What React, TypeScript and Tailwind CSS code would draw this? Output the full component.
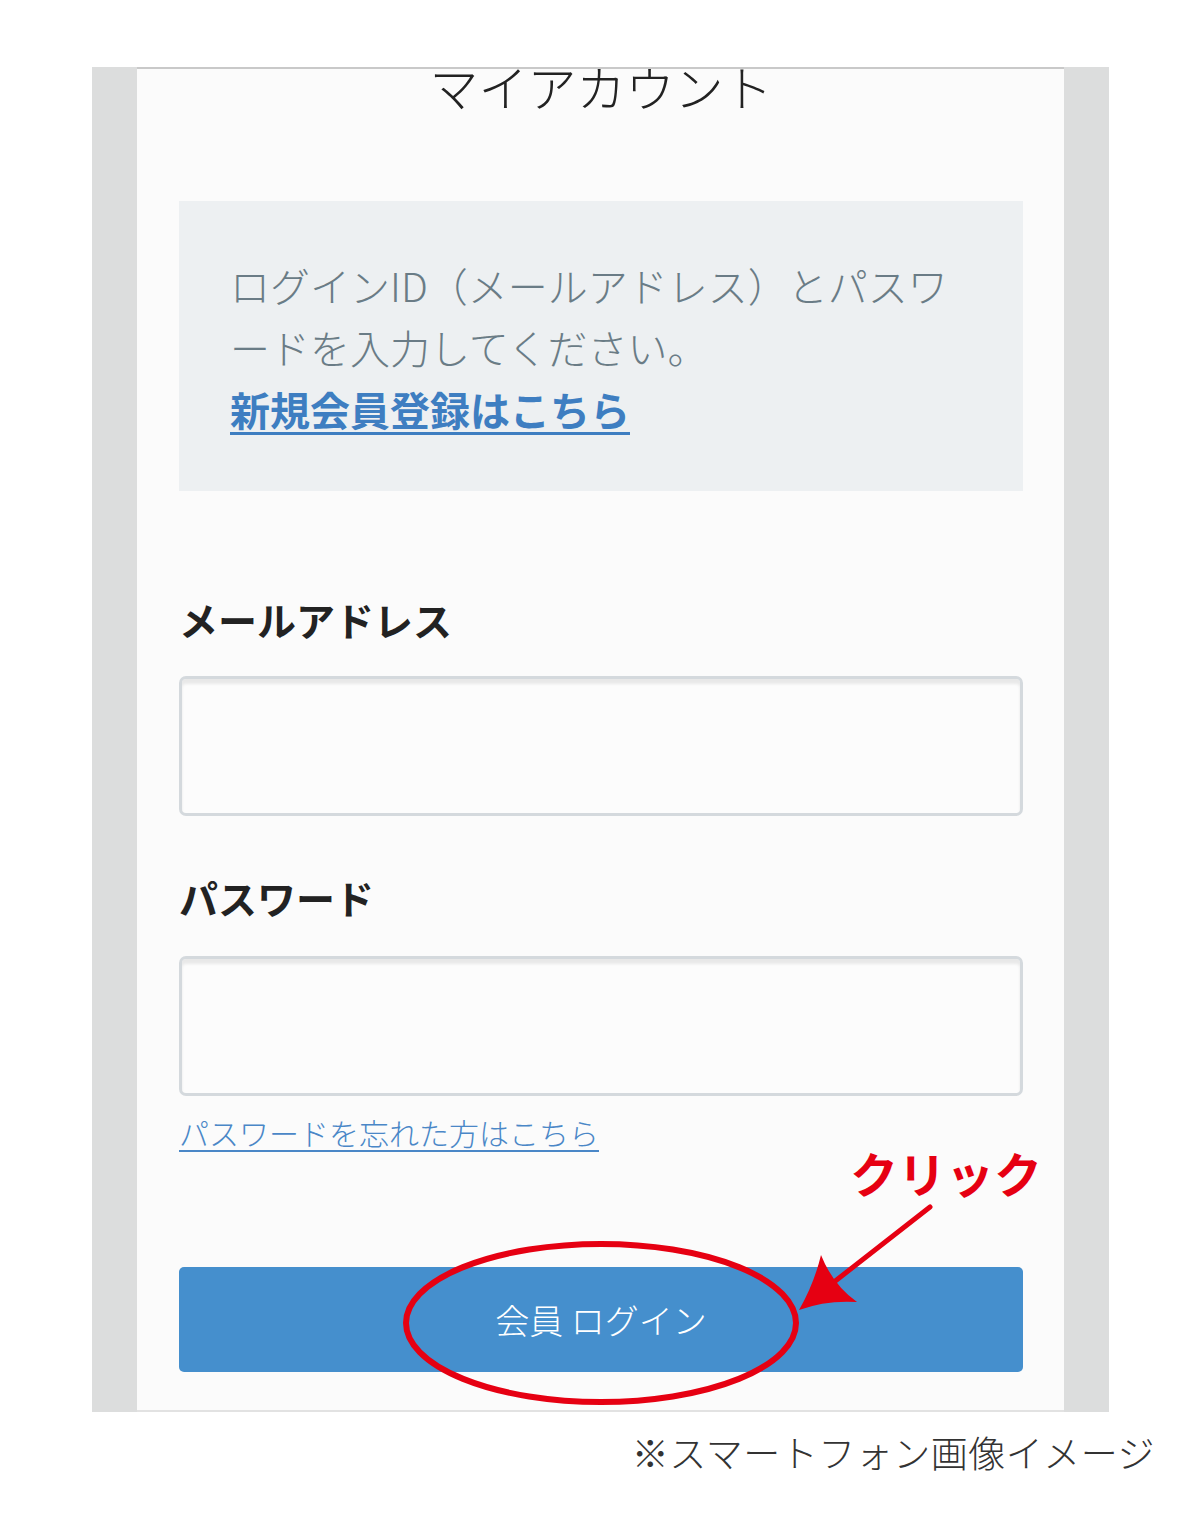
import React from "react";

const jp = { fontFamily: '"Noto Sans CJK JP", "Noto Sans", sans-serif' };

export default function App() {
  return (
    <div className="relative w-[1200px] h-[1514px] bg-white overflow-hidden" style={jp}>
      {/* スマホ枠 */}
      <div className="ml-[92px] mt-[67px] w-[1017px] h-[1345px] bg-[#dcdddd]">
        <div className="ml-[45px] w-[927px] h-full bg-[#fbfbfb] border-t-2 border-b-2 border-t-[#c9c9c9] border-b-[#e2e2e2] pr-[41px] pl-[42px]">
          {/* タイトル（スクショでは上が切れている） */}
          <div className="h-[132px] overflow-hidden">
            <h1 className="-mt-[8px] text-center text-[49px] leading-none font-light text-[#222]">
              マイアカウント
            </h1>
          </div>

          {/* 案内 */}
          <div className="h-[290px] bg-[#edf0f2] px-[51px] pt-[53px]">
            <p className="text-[40px] leading-[62px] text-[#6a7c86] font-light">
              ログインID（メールアドレス）とパスワ
              <br />
              ードを入力してください。
            </p>
            <a className="block text-[40px] leading-[62px] font-bold text-[#3e7ec1] underline underline-offset-[6px] decoration-[3px] w-fit">
              新規会員登録はこちら
            </a>
          </div>

          {/* フォーム */}
          <div className="pt-[100px]">
            <label className="block text-[39px] leading-[57px] font-bold text-[#222]">
              メールアドレス
            </label>
            <div className="mt-[28px] h-[140px] rounded-[7px] border-[3px] border-[#d4d9dd] bg-[#fcfcfc] shadow-[inset_0_5px_3px_rgba(0,0,0,0.08)]" />

            <label className="block mt-[53px] text-[39px] leading-[57px] font-bold text-[#222]">
              パスワード
            </label>
            <div className="mt-[30px] h-[140px] rounded-[7px] border-[3px] border-[#d4d9dd] bg-[#fcfcfc] shadow-[inset_0_5px_3px_rgba(0,0,0,0.08)]" />

            <a className="block mt-[14px] w-fit text-[30px] leading-[45px] font-light text-[#4a87c7] underline underline-offset-[5px] decoration-2">
              パスワードを忘れた方はこちら
            </a>

            <button className="mt-[112px] w-full h-[105px] rounded-[5px] bg-[#458fcd] text-white text-[34px] font-light flex items-center justify-center">
              会員&nbsp;ログイン
            </button>
          </div>
        </div>
      </div>

      {/* 注記 */}
      <div className="flex justify-end pr-[45px] mt-[12px]">
        <p className="text-[37px] leading-[56px] tracking-[0.5px] font-light text-[#333]">※スマートフォン画像イメージ</p>
      </div>

      {/* 赤い注釈 */}
      <span className="absolute left-[850px] top-[1148px] text-[48px] leading-none font-bold text-[#e60012]">
        クリック
      </span>
      <svg className="absolute inset-0 pointer-events-none" width="1200" height="1514" viewBox="0 0 1200 1514">
        <ellipse cx="601" cy="1323" rx="195" ry="79" fill="none" stroke="#e60012" strokeWidth="6" />
        <line x1="930" y1="1207" x2="834" y2="1282" stroke="#e60012" strokeWidth="5" strokeLinecap="round" />
        <path d="M799 1310 Q814 1284 821 1255 Q833 1285 857 1302 Q826 1300 799 1310 Z" fill="#e60012" />
      </svg>
    </div>
  );
}
